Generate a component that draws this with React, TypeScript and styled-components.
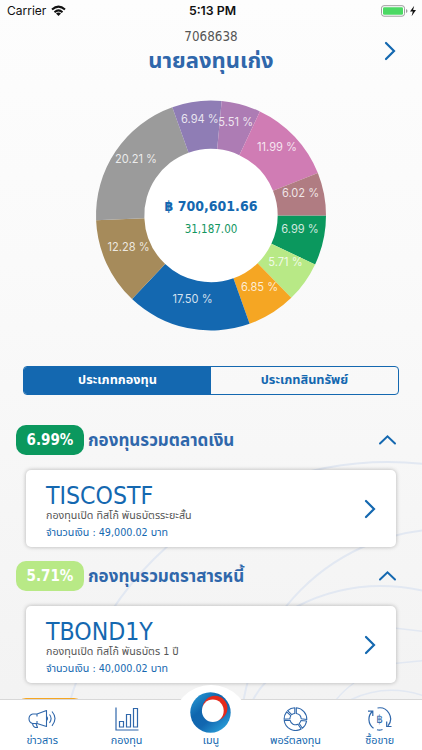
import React from "react";
import styled, { createGlobalStyle } from "styled-components";

const BLUE = "#1468b0";
const INK = "#2f67ab";

const GlobalStyle = createGlobalStyle`
  * { box-sizing: border-box; }
  body { margin: 0; background: #fff; overflow: hidden; }
`;

const Screen = styled.div`
  position: relative;
  width: 422px;
  height: 750px;
  overflow: hidden;
  display: flex;
  flex-direction: column;
  background: linear-gradient(180deg, #fdfdfd 0%, #fafafa 35%, #f7f7f7 60%, #f2f2f2 100%);
  font-family: "DejaVu Sans Condensed", "Noto Sans", "Noto Sans Thai", sans-serif;
  color: ${BLUE};
`;

const Backdrop = styled.svg`
  position: absolute;
  inset: 0;
`;

const StatusBar = styled.div`
  position: relative;
  height: 22px;
  flex: none;
  padding: 0 4px 0 7px;
  display: grid;
  grid-template-columns: 1fr auto 1fr;
  align-items: center;
  font: 400 12px/22px Inter, sans-serif;
  color: #111;
`;
const Carrier = styled.div`
  display: flex;
  align-items: center;
  gap: 5px;
`;
const Clock = styled.div`
  font-weight: 600;
  font-size: 12.3px;
`;
const Power = styled.div`
  display: flex;
  justify-content: flex-end;
  align-items: center;
`;

const Header = styled.header`
  position: relative;
  height: 70px;
  flex: none;
  display: grid;
  grid-template-columns: 64px 1fr 64px;
  justify-items: center;
`;
const Account = styled.div`
  grid-column: 2;
  display: flex;
  flex-direction: column;
  align-items: center;
`;
const AccountId = styled.div`
  font-size: 13.3px;
  line-height: 18px;
  margin-top: 6px;
  color: #555;
`;
const AccountName = styled.h1`
  margin: 0;
  font-size: 22px;
  line-height: 30px;
  font-weight: 700;
  white-space: nowrap;
  color: ${INK};
`;
const NextButton = styled.div`
  padding-top: 19px;
`;

const ChartArea = styled.div`
  position: relative;
  height: 274px;
  flex: none;
`;
const SliceLabel = styled.text`
  font: 400 11.1px Inter, sans-serif;
  fill: #fff;
  fill-opacity: 0.82;
`;
const Total = styled.text`
  font: 700 14px "DejaVu Sans Condensed", "Noto Sans", sans-serif;
  fill: ${BLUE};
`;
const Gain = styled.text`
  font: 400 11.5px "DejaVu Sans Condensed", "Noto Sans", sans-serif;
  fill: #12965f;
`;

const Tabs = styled.div`
  position: relative;
  flex: none;
  margin: 0 23px;
  height: 29px;
  display: flex;
  border: 1px solid ${BLUE};
  border-radius: 4px;
  overflow: hidden;
`;
const Tab = styled.div<{ $active?: boolean }>`
  flex: 1;
  display: flex;
  align-items: center;
  justify-content: center;
  font-size: 12.7px;
  font-weight: 700;
  white-space: nowrap;
  color: ${(p) => (p.$active ? "#fff" : BLUE)};
  background: ${(p) => (p.$active ? BLUE : "transparent")};
`;

const Groups = styled.main`
  position: relative;
  flex: none;
  padding-top: 30px;
`;
const Group = styled.section`
  height: 136.4px;
`;
const GroupHead = styled.div`
  display: flex;
  align-items: center;
  height: 30px;
  padding: 0 25px 0 16px;
`;
const Percent = styled.div<{ $color: string }>`
  width: 68px;
  height: 30px;
  border-radius: 10px;
  background: ${(p) => p.$color};
  color: #fff;
  font-size: 15px;
  font-weight: 700;
  line-height: 31px;
  text-align: center;
`;
const GroupName = styled.div`
  flex: 1;
  padding-left: 4px;
  font-size: 17px;
  line-height: 30px;
  font-weight: 700;
  white-space: nowrap;
  color: ${INK};
`;
const Card = styled.div`
  margin: 15px 26px 0;
  height: 77px;
  border-radius: 5px;
  background: #fff;
  box-shadow: 0 0 4px rgba(0, 0, 0, 0.28);
  display: flex;
  align-items: center;
  justify-content: space-between;
  padding: 0 20px;
`;
const CardText = styled.div`
  display: flex;
  flex-direction: column;
  padding-top: 4px;
`;
const FundCode = styled.div`
  font-size: 24.6px;
  line-height: 26px;
  padding-top: 2px;
  margin-bottom: -2px;
`;
const FundName = styled.div`
  font-size: 10.7px;
  line-height: 17px;
  white-space: nowrap;
  color: #555;
`;
const Amount = styled(FundName)`
  color: ${BLUE};
`;

const NavBar = styled.nav`
  position: absolute;
  left: 0;
  right: 0;
  bottom: 0;
  height: 51px;
  display: grid;
  grid-template-columns: repeat(5, 1fr);
  background: #fff;
  border-top: 1px solid #d8d8d8;
`;
const NavItem = styled.div`
  display: flex;
  flex-direction: column;
  align-items: center;
  justify-content: flex-end;
  gap: 2px;
  padding-bottom: 1px;
`;
const NavLabel = styled.div`
  font-size: 10.8px;
  line-height: 16px;
  white-space: nowrap;
`;
const MenuItem = styled(NavItem)`
  justify-self: center;
  width: 78px;
  height: 65px;
  margin-top: -15px;
  gap: 0;
  padding-bottom: 1px;
  border-radius: 39px 39px 0 0;
  background: #fff;
`;

const slices = [
  { v: 6.99, c: "#0b985e", x: 300, y: 229 },
  { v: 5.71, c: "#b8e986", x: 285.5, y: 262 },
  { v: 6.85, c: "#f5a623", x: 259.5, y: 286.5 },
  { v: 17.5, c: "#1468b0", x: 192.5, y: 298.5 },
  { v: 12.28, c: "#a68b5b", x: 128.5, y: 247 },
  { v: 20.21, c: "#9b9b9b", x: 136, y: 158.5 },
  { v: 6.94, c: "#8f7db5", x: 199.9, y: 119 },
  { v: 5.51, c: "#ad7cb4", x: 235.7, y: 121.8 },
  { v: 11.99, c: "#d07cb4", x: 277, y: 147 },
  { v: 6.02, c: "#b07c82", x: 300.5, y: 192.5 },
];

function ring(start: number, end: number) {
  const p = (r: number, t: number) =>
    `${(211 + r * Math.cos(t * Math.PI * 2)).toFixed(2)} ${(123.5 + r * Math.sin(t * Math.PI * 2)).toFixed(2)}`;
  return `M${p(115, start)} A115 115 0 0 1 ${p(115, end)} L${p(66.7, end)} A66.7 66.7 0 0 0 ${p(66.7, start)}Z`;
}

function Donut() {
  let at = 0;
  return (
    <svg width="422" height="274">
      <circle cx="211" cy="123.5" r="68" fill="#fff" />
      {slices.map((s) => {
        const from = at;
        at += s.v / 100;
        return <path key={s.v} d={ring(from, at)} fill={s.c} />;
      })}
      {slices.map((s) => (
        <SliceLabel key={s.v} x={s.x} y={s.y - 92 + 4.1} textAnchor="middle">
          {s.v.toFixed(2)} %
        </SliceLabel>
      ))}
      <Total x="211" y="118.7" textAnchor="middle">฿ 700,601.66</Total>
      <Gain x="211" y="141" textAnchor="middle">31,187.00</Gain>
    </svg>
  );
}

function Chevron({ up = false }: { up?: boolean }) {
  return up ? (
    <svg width="19" height="12" fill="none" stroke={BLUE} strokeWidth="2" strokeLinecap="round">
      <path d="M2 9.5 9.5 2.3 17 9.5" />
    </svg>
  ) : (
    <svg width="12" height="20" fill="none" stroke={BLUE} strokeWidth="2.2" strokeLinecap="round">
      <path d="M2 2 10 10 2 18" />
    </svg>
  );
}

function Swirls() {
  return (
    <Backdrop width="422" height="750" fill="none" stroke="#e2e8f2" strokeWidth="2">
      <circle cx="388" cy="793" r="331" />
      <circle cx="447.5" cy="736" r="207" />
      <path d="M253 700Q258 690 266 682M296 607Q356 576 424 591" />
      <g strokeWidth="1.5">
        <path d="M394 628 424 631.5M394 663.5 424 660.5M336 700Q344 690 354 683M350 700Q386 683 424 696" />
      </g>
    </Backdrop>
  );
}

function Wifi() {
  return (
    <svg width="15" height="12" viewBox="0 0 15 12" fill="none" stroke="#111" strokeWidth="2">
      <path d="M1 4.6Q7.5-1.3 14 4.6M3.5 7.2Q7.5 3.6 11.5 7.2" />
      <path d="M7.5 11 5 8.5Q7.5 6.6 10 8.5Z" fill="#111" stroke="none" />
    </svg>
  );
}

function Battery() {
  return (
    <svg width="38" height="13" viewBox="0 0 38 13">
      <rect x="1.5" y="0.7" width="23" height="10.5" rx="2.5" fill="#fff" stroke="#9d9d9d" />
      <rect x="3" y="2.2" width="20" height="7.5" rx="1.2" fill="#4cd964" />
      <path d="M26 4q1.5.6 1.5 2t-1.5 2Z" fill="#9d9d9d" />
      <path d="M34.2 0.7 30 6.6h2.8L31.6 11.2 36 5.1h-2.9Z" fill="#111" />
    </svg>
  );
}

function Megaphone() {
  return (
    <svg width="28" height="24" viewBox="0 0 28 24" fill="none" stroke={INK} strokeWidth="1.1" strokeLinejoin="round">
      <path d="M4.5 7H9L18.5 3.5V19.5L9 16.5H4.5Q1 15.5 1 11.8T4.5 7M9 7V9.5M9 14V16.5" />
      <path d="M4.5 16.5Q5 20 7.5 20.5H9.5L8 16.5" />
      <path d="M18.5 9.5Q20.500 11.5 18.5 13.5M21.500 7.5Q24.7 11.5 21.5 15.8M24 4.5Q30 11.5 24 18.8" />
    </svg>
  );
}

function Bars() {
  return (
    <svg width="24" height="24" viewBox="0 0 24 24" fill="none" stroke={INK} strokeWidth="1.2">
      <path d="M1 .5V23H23.5M4.5 14.5h4v5.5h-4zM11.5 7.5h4V20h-4zM18.5 1.5h4V20h-4z" />
    </svg>
  );
}

function Portfolio() {
  return (
    <svg width="25" height="24" viewBox="0 0 25 24" fill="none" stroke={INK} strokeWidth="1.1" strokeLinejoin="round">
      <path d="M11.8.7V6.5A5.8 5.8 0 0 0 8.8 7.6L4.6 3.6A11.5 11.5 0 0 1 11.8.7Z" />
      <path d="M13.3.7A11.5 11.5 0 0 1 23.8 12.5L18.2 11.8A5.8 5.8 0 0 0 13.3 6.5Z" />
      <path d="M3.6 4.8 7.8 8.7A5.8 5.8 0 0 0 6.9 11.8L1.1 12.3A11.5 11.5 0 0 1 3.6 4.8Z" />
      <path d="M1.2 13.5 7 13.2A5.8 5.8 0 0 0 15 17.3L18.2 22A11.5 11.5 0 0 1 1.2 13.5Z" />
      <path d="M23.6 14A11.5 11.5 0 0 1 19.4 21.2L16.2 16.5A5.8 5.8 0 0 0 17.9 13.5Z" />
    </svg>
  );
}

const CoinSign = styled.text`
  font: 400 11.5px "DejaVu Sans Condensed", "Noto Sans", sans-serif;
  fill: ${INK};
  stroke: none;
`;

function Exchange() {
  return (
    <svg width="25" height="24" viewBox="0 0 25 24" fill="none" stroke={INK} strokeWidth="1.2">
      <path d="M6.5 21.3A11 11 0 0 1 5.5 4.3M1 4.2H5.8V9M10.5 1A11 11 0 0 1 21 18.8M24.5 19.5H19.7V14.5M10 22.7Q12.5 23.5 15.5 22.5" />
      <CoinSign x="12.5" y="16.2" textAnchor="middle">฿</CoinSign>
    </svg>
  );
}

function Logo() {
  return (
    <svg width="41" height="41" viewBox="0 0 41 41">
      <defs>
        <linearGradient id="orb" x1="0" y1="0" x2="0.8" y2="1">
          <stop offset="0" stopColor="#2ba3dc" />
          <stop offset="0.4" stopColor="#0f66ae" />
          <stop offset="0.65" stopColor="#1267b0" />
          <stop offset="1" stopColor="#2ba3dc" />
        </linearGradient>
      </defs>
      <circle cx="20.5" cy="20.5" r="20.2" fill="url(#orb)" />
      <circle cx="25" cy="16.2" r="12.4" fill="#e52a1c" />
      <ellipse cx="22.8" cy="18.7" rx="10.9" ry="11.3" fill="#fff" />
    </svg>
  );
}

const groups = [
  { pct: "6.99%", color: "#0b985e", name: "กองทุนรวมตลาดเงิน", code: "TISCOSTF", fund: "กองทุนเปิด ทิสโก้ พันธบัตรระยะสั้น", amount: "49,000.02" },
  { pct: "5.71%", color: "#b8e986", name: "กองทุนรวมตราสารหนี้", code: "TBOND1Y", fund: "กองทุนเปิด ทิสโก้ พันธบัตร 1 ปี", amount: "40,000.02" },
];

export default function App() {
  return (
    <Screen>
      <GlobalStyle />
      <Swirls />
      <StatusBar>
        <Carrier>Carrier <Wifi /></Carrier>
        <Clock>5:13 PM</Clock>
        <Power><Battery /></Power>
      </StatusBar>
      <Header>
        <Account>
          <AccountId>7068638</AccountId>
          <AccountName>นายลงทุนเก่ง</AccountName>
        </Account>
        <NextButton><Chevron /></NextButton>
      </Header>
      <ChartArea><Donut /></ChartArea>
      <Tabs>
        <Tab $active>ประเภทกองทุน</Tab>
        <Tab>ประเภทสินทรัพย์</Tab>
      </Tabs>
      <Groups>
        {groups.map((g) => (
          <Group key={g.code}>
            <GroupHead>
              <Percent $color={g.color}>{g.pct}</Percent>
              <GroupName>{g.name}</GroupName>
              <Chevron up />
            </GroupHead>
            <Card>
              <CardText>
                <FundCode>{g.code}</FundCode>
                <FundName>{g.fund}</FundName>
                <Amount>จำนวนเงิน : {g.amount} บาท</Amount>
              </CardText>
              <Chevron />
            </Card>
          </Group>
        ))}
        <GroupHead>
          <Percent $color="#f5a623" />
        </GroupHead>
      </Groups>
      <NavBar>
        <NavItem><Megaphone /><NavLabel>ข่าวสาร</NavLabel></NavItem>
        <NavItem><Bars /><NavLabel>กองทุน</NavLabel></NavItem>
        <MenuItem><Logo /><NavLabel>เมนู</NavLabel></MenuItem>
        <NavItem><Portfolio /><NavLabel>พอร์ตลงทุน</NavLabel></NavItem>
        <NavItem><Exchange /><NavLabel>ซื้อขาย</NavLabel></NavItem>
      </NavBar>
    </Screen>
  );
}
